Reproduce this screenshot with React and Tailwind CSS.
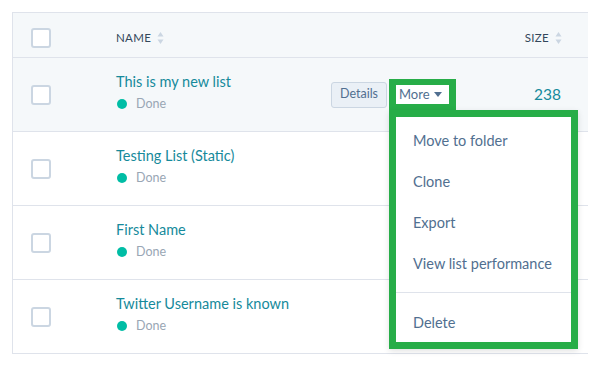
import React from 'react';

const rows = [
  { name: 'This is my new list', status: 'Done', size: '238', active: true },
  { name: 'Testing List (Static)', status: 'Done' },
  { name: 'First Name', status: 'Done' },
  { name: 'Twitter Username is known', status: 'Done' },
];

const menuItems = ['Move to folder', 'Clone', 'Export', 'View list performance'];

const font = { fontFamily: '"Lato", "Liberation Sans", sans-serif' };

// Checkbox square used in each row
const Checkbox = () => (
  <div className="w-5 h-5 shrink-0 rounded-[3px] border-2 border-[#cbd6e2] bg-white" />
);

// Small up/down sort indicator next to column headers
const SortArrows = () => (
  <svg width="7" height="14" viewBox="0 0 7 14" className="ml-[6px]">
    <path d="M3.5 1 L6.5 5.5 H0.5 Z" fill="#cbd6e2" />
    <path d="M3.5 13 L6.5 8.5 H0.5 Z" fill="#cbd6e2" />
  </svg>
);

export default function App() {
  return (
    <div className="w-[593px] h-[365px] bg-white pt-3 pl-3 relative" style={font}>
      <div className="w-[576px] border-l border-t border-[#dfe3eb]">
        {/* Header */}
        <div className="flex items-center h-[45px] pt-[5px] bg-[#f5f8fa] border-b border-[#dfe3eb]">
          <div className="pl-[18px]">
            <Checkbox />
          </div>
          <div className="flex-1 flex items-center pl-[65px]">
            <span className="text-[11.5px] tracking-[0.3px] text-[#33475b]">NAME</span>
            <SortArrows />
          </div>
          <div className="flex items-center justify-end pr-[26px]">
            <span className="text-[11.5px] tracking-[0.3px] text-[#33475b]">SIZE</span>
            <SortArrows />
          </div>
        </div>

        {/* Rows */}
        {rows.map((row) => (
          <div
            key={row.name}
            className={`flex items-center h-[74px] border-b border-[#dfe3eb] ${row.active ? 'bg-[#f5f8fa]' : 'bg-white'}`}
          >
            <div className="pl-[18px]">
              <Checkbox />
            </div>
            <div className="flex-1 pl-[65px] pb-[5px] flex flex-col">
              <span className="text-[14.5px] leading-[20px] text-[#168a9b]">{row.name}</span>
              <span className="flex items-center mt-[3px] text-[12.5px] leading-[18px] text-[#99a6b4]">
                <span className="w-[10px] h-[10px] rounded-full bg-[#00bda5] mr-[9px] ml-px" />
                {row.status}
              </span>
            </div>
            {row.active && (
              <div className="flex items-center">
                <button className="h-[26px] w-[56px] rounded-[3px] border border-[#cbd6e2] bg-[#eaf0f6] text-[12.5px] text-[#516f90]">
                  Details
                </button>
                <div className="ml-[2px] border-[7px] border-y-[6px] border-[#27ad48]">
                  <div className="bg-white h-[19px] w-[53px] flex items-center pl-[3px] text-[13px] text-[#516f90]">
                    More
                    <svg width="8" height="5" viewBox="0 0 8 5" className="ml-[4px]">
                      <path d="M0 0 H8 L4 5 Z" fill="#516f90" />
                    </svg>
                  </div>
                </div>
              </div>
            )}
            <div className="w-[132px] pr-[27px] text-right text-[15.5px] text-[#168a9b]">
              {row.size}
            </div>
          </div>
        ))}
      </div>

      {/* Dropdown menu (overlay) */}
      <div className="absolute left-[389px] top-[110px] w-[189px] border-[7px] border-[#27ad48] bg-white shadow-[0_2px_6px_rgba(0,0,0,0.12)]">
        <div className="flex flex-col pt-[3px]">
          {menuItems.map((item) => (
            <div key={item} className="h-[41px] flex items-center pl-[17px] text-[14.5px] text-[#516f90]">
              {item}
            </div>
          ))}
          <div className="mt-[8px] border-t border-[#dfe3eb]" />
          <div className="h-[49px] flex items-center pl-[17px] pt-[10px] text-[14.5px] text-[#516f90]">
            Delete
          </div>
        </div>
      </div>
    </div>
  );
}
